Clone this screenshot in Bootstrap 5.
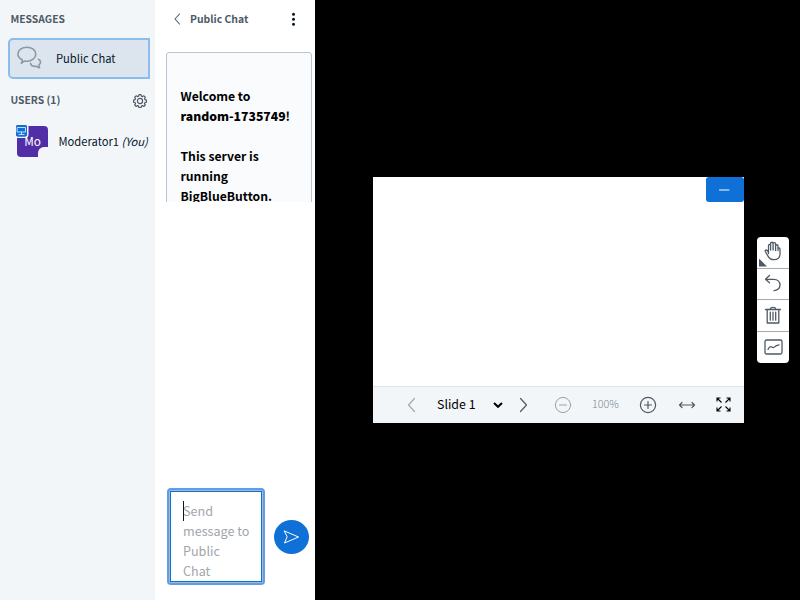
<!DOCTYPE html>
<html lang="en">
<head>
<meta charset="utf-8">
<title>BigBlueButton</title>
<meta name="viewport" content="width=device-width, initial-scale=1">
<link href="https://cdn.jsdelivr.net/npm/bootstrap@5.3.0/dist/css/bootstrap.min.css" rel="stylesheet">
<style>
body{font-family:"Noto Sans CJK SC","Noto Sans",sans-serif;font-size:12.6px;line-height:20px;color:#06172a;background:#000}
svg{display:block;fill:none;stroke:#4e5a66;stroke-linecap:round;stroke-linejoin:round;flex:none}
.sidebar{width:155px;background:#f3f6f9;font-size:11.2px}
.section-title{font-size:10.3px;font-weight:600;color:#4e5a66;line-height:20px;padding-left:10.5px}
.section-top{padding-top:9px}
.chat-item{width:142px;height:41px;margin:9px 0 0 8px;background:#dce4ed;border:2px solid #8cbbee;border-radius:5px 0 0 5px;padding:0 0 2px 7px}
.chat-item span{margin-left:14px}
.chat-icon{stroke:#8b9aa8}
.users-head{margin-top:11px;padding-right:8px}
.users-head svg{margin-top:2px}
.user-row{margin:15px 0 0 17px;height:32px;white-space:nowrap}
.user-name{margin-left:10.5px}
.user-name em{letter-spacing:-.1px}
.avatar{width:31px;height:31px;background:#522da8;color:#fff;border-radius:4px;font-size:11.8px}
.presenter{top:-3px;left:-3px}
.cut{right:-2px;bottom:-2px;width:12px;height:12px;border-radius:50% 0 0 0;background:#f3f6f9}
.chat{width:160px}
.chat-head{height:39px;padding:0 17px 1px 19px}
.chat-title{font-size:10.4px;font-weight:600;color:#4e5a66;margin-left:9px}
.messages{height:150px;margin:13px 3px 0 11px}
.welcome{background:#f9fbfc;border:1px solid #b9c5d0;border-radius:3px;padding:33px 0 20px 13.5px;color:#000;font-weight:600;height:240px;font-size:12.2px}
.compose{padding:0 6px 15px 12px}
.message-box{width:98px;height:97px;border:2px solid #5a9feb;border-radius:4px;background:#b2b7bd;padding:1px}
.message-inner{width:92px;height:91px;border:1px solid #0f70d7;background:#fff;padding:9px 0 0 12px;color:#a1a6ab;font-size:12.6px;overflow:hidden}
.caret{width:1px;height:20px;background:#06172a;top:0;left:0}
.send{width:35px;height:34px;background:#0f70d7;margin-bottom:31px}
.line-white{stroke:#fff}
.slide{width:371px;height:246px;margin-left:58px;background:#fff}
.minimize{width:38px;height:25px;background:#0f70d7;border-radius:3px;padding-right:1px}
.slide-bar{height:37px;background:#f3f6f9;border-top:1px solid #dce4ec;padding:0 13px 1px 32px}
.slide-name{font-size:12.4px;color:#000;width:60px;white-space:nowrap;padding-bottom:1px}
.line-off{stroke:#a1a8af}
.line-bold{stroke:#000;stroke-linecap:butt;stroke-linejoin:miter}
.zoom-out{stroke:#98a1aa;margin-left:26px}
.zoom-value{font-size:10.7px;font-weight:300;color:#7d8791;width:28px;margin:0 19px 0 20px;padding-bottom:2px;white-space:nowrap}
.tools{width:32px;margin-left:13px;border-radius:4px;background:#fff;height:126px;overflow:hidden}
.tool{height:31.5px;border-bottom:1px solid #a4aab0;padding-bottom:1px}
.tool:first-child{padding-bottom:2px}
.tool:last-child{border:0}
.corner{left:2px;bottom:1px;width:8px;height:8px;background:#4e5a66;clip-path:polygon(0 0,100% 100%,0 100%)}
</style>
<script src="https://cdn.jsdelivr.net/npm/bootstrap@5.3.0/dist/js/bootstrap.bundle.min.js"></script>
</head>
<body class="vh-100 d-flex overflow-hidden">
<aside class="sidebar flex-shrink-0 h-100">
  <div class="section-title section-top">MESSAGES</div>
  <div class="chat-item d-flex align-items-center">
    <svg class="chat-icon" width="25" height="24" viewBox="0 0 25 24" stroke-width="1.6"><path d="M4.3 17.2c.9-1 1.2-2.100.9-3.500C2.600 12.400.9 10.600.9 8.200.9 4.300 4.800 1.200 9.800 1.200s9 3.100 9 7-4 7-9 7c-1 0-1.700-.1-2.400-.2-1 .9-1.900 1.700-3.100 2.200z"/><path d="M21.500 13.300c1.700.9 2.300 2.300 1.900 3.600-.2.800-.7 1.400-1.500 2 0 1.100.2 2 .7 2.900-1.300-.2-2.200-.7-3-1.500-3.300.3-5.700-1-6-3"/></svg>
    <span>Public Chat</span>
  </div>
  <div class="users-head d-flex align-items-center justify-content-between">
    <div class="section-title">USERS (1)</div>
    <svg width="14" height="14" viewBox="0 0 14 14" stroke-width="1.200"><circle cx="7" cy="7" r="2.600"/><path d="M6 .6h2l.4 1.500 1.100.5 1.400-.8 1.400 1.400-.8 1.400.5 1.100 1.500.4v2l-1.500.4-.5 1.100.8 1.400-1.400 1.400-1.400-.8-1.100.5-.4 1.500H6l-.4-1.500-1.100-.5-1.400.8L1.700 11l.8-1.400L2 8.500.5 8.100v-2L2 5.700l.5-1.100-.8-1.400 1.400-1.400 1.400.8 1.100-.5z"/></svg>
  </div>
  <div class="user-row d-flex align-items-center">
    <div class="avatar position-relative d-flex align-items-center justify-content-center flex-shrink-0">Mo
      <span class="cut position-absolute"></span>
      <svg class="presenter position-absolute" width="16" height="16" viewBox="0 0 16 16"><rect x="2" y="2" width="11" height="11.500" rx="2" fill="#0f70d7" stroke="#f3f6f9" stroke-width="3" paint-order="stroke"/><rect x="2" y="2" width="11" height="11.500" rx="2" fill="#0f70d7" stroke="none"/><path d="M3.500 4.500h8v4.500h-8zM7.500 9v2M5 11.500h5" stroke="#d5e6fa" stroke-width=".9" stroke-linejoin="miter"/></svg>
    </div>
    <span class="user-name">Moderator1 <em>(You)</em></span>
  </div>
</aside>
<section class="chat bg-white flex-shrink-0 h-100 d-flex flex-column">
  <div class="chat-head d-flex align-items-center">
    <svg width="7" height="12" viewBox="0 0 7 12" stroke-width="1.100"><path d="M5.500 1 1 6l4.500 5"/></svg>
    <span class="chat-title">Public Chat</span>
    <svg class="ms-auto" width="9" height="14" viewBox="0 0 9 14"><g fill="#06172a" stroke="none"><circle cx="4.500" cy="2.200" r="1.500"/><circle cx="4.500" cy="7.200" r="1.500"/><circle cx="4.500" cy="12.200" r="1.500"/></g></svg>
  </div>
  <div class="messages overflow-hidden">
    <div class="welcome">Welcome to<br><b>random-1735749</b>!<br><br>This server is<br>running<br>BigBlueButton.</div>
  </div>
  <div class="compose mt-auto d-flex align-items-end justify-content-between">
    <div class="message-box"><div class="message-inner"><div class="position-relative"><span class="caret position-absolute"></span>Send<br>message to<br>Public<br>Chat</div></div></div>
    <div class="send rounded-circle d-flex align-items-center justify-content-center">
      <svg class="line-white" width="17" height="14" viewBox="0 0 17 14" stroke-width="1"><path d="M1.500 1 15.500 7l-14 6L4 7z"/></svg>
    </div>
  </div>
</section>
<main class="flex-grow-1 h-100 d-flex align-items-center">
  <div class="slide d-flex flex-column flex-shrink-0">
    <div class="minimize align-self-end d-flex align-items-center justify-content-center"><svg class="line-white" width="11" height="2" viewBox="0 0 11 2"><path d="M.5 1h9.500"/></svg></div>
    <div class="slide-bar mt-auto d-flex align-items-center">
      <svg class="line-off" width="12" height="16" viewBox="0 0 12 16" stroke-width="1.200"><path d="M9.500 1.500 3.500 8l6 6.500"/></svg>
      <span class="slide-name ms-3 ps-1">Slide 1</span>
      <svg class="line-bold" width="10" height="8" viewBox="0 0 10 8" stroke-width="2"><path d="M1 2l4 3.800L9 2"/></svg>
      <svg class="ms-3" width="9" height="16" viewBox="0 0 9 16" stroke-width="1.200"><path d="M1.500 1.500 7.500 8l-6 6.500"/></svg>
      <svg class="zoom-out" width="18" height="18" viewBox="0 0 18 18"><circle cx="9" cy="9" r="7.600"/><path d="M5.500 9h7"/></svg>
      <span class="zoom-value">100%</span>
      <svg width="18" height="18" viewBox="0 0 18 18" stroke-width="1.200"><circle cx="9" cy="9" r="7.600"/><path d="M5.500 9h7M9 5.500v7"/></svg>
      <svg class="ms-auto" width="18" height="8" viewBox="0 0 18 8" stroke-width="1.200"><path d="M1.500 4h15M4 1.500 1.500 4 4 6.500M14 1.500 16.500 4 14 6.500"/></svg>
      <svg class="line-bold ms-auto" width="15" height="15" viewBox="0 0 15 15" stroke-width="1.100"><path d="M1 4.500V1H4.500M1 1 5.500 5.500M10.500 1H14v3.500M14 1 9.500 5.500M1 10.500V14H4.500M1 14 5.500 9.500M10.500 14H14v-3.500M14 14 9.500 9.500"/></svg>
    </div>
  </div>
  <div class="tools flex-shrink-0">
    <div class="tool position-relative d-flex align-items-center justify-content-center"><svg width="18" height="20" viewBox="0 0 18 20" stroke-width="1.300"><path d="M4.500 12.500V4.700c0-1.700 2.100-1.700 2.100 0V9V2.600c0-1.800 2.500-1.800 2.500 0V9 3c0-1.800 2.500-1.800 2.500 0v6.500V5c0-1.700 2.400-1.700 2.400 0v4.500V8c0-1.500 2-1.500 2 0v5c0 3.500-2.500 5.700-6 5.700-3 0-4.700-1.200-6-3.600L1.300 10.500c-.7-1.400 1-2.100 2-.8l1.200 1.800"/></svg><span class="corner position-absolute"></span></div>
    <div class="tool d-flex align-items-center justify-content-center"><svg width="18" height="18" viewBox="0 0 18 18" stroke-width="1.300"><path d="M5.500 1.500 1.500 5.300l4 3.500M1.500 5.300h8.200c4 0 6.300 2.700 6.300 5.700 0 3.300-2.700 5.700-6 5.700"/></svg></div>
    <div class="tool d-flex align-items-center justify-content-center"><svg width="18" height="18" viewBox="0 0 18 18" stroke-width="1.300"><path d="M1.500 3.500h15M6.300 3.300c0-2.600 5.400-2.600 5.400 0M3.200 3.500V17h11.600V3.500M6.300 6.200v8M9 6.200v8M11.700 6.200v8"/></svg></div>
    <div class="tool d-flex align-items-center justify-content-center"><svg width="19" height="16" viewBox="0 0 19 16" stroke-width="1.300"><rect x="1" y="1" width="17" height="14" rx="1.500"/><path d="M4 10.500c1.200-2.500 2.500-3.300 3.700-2.500 1.300.9 2.200.9 3.200-.3 1-1.200 2.200-1.600 4.100-1.900"/></svg></div>
  </div>
</main>
</body>
</html>
